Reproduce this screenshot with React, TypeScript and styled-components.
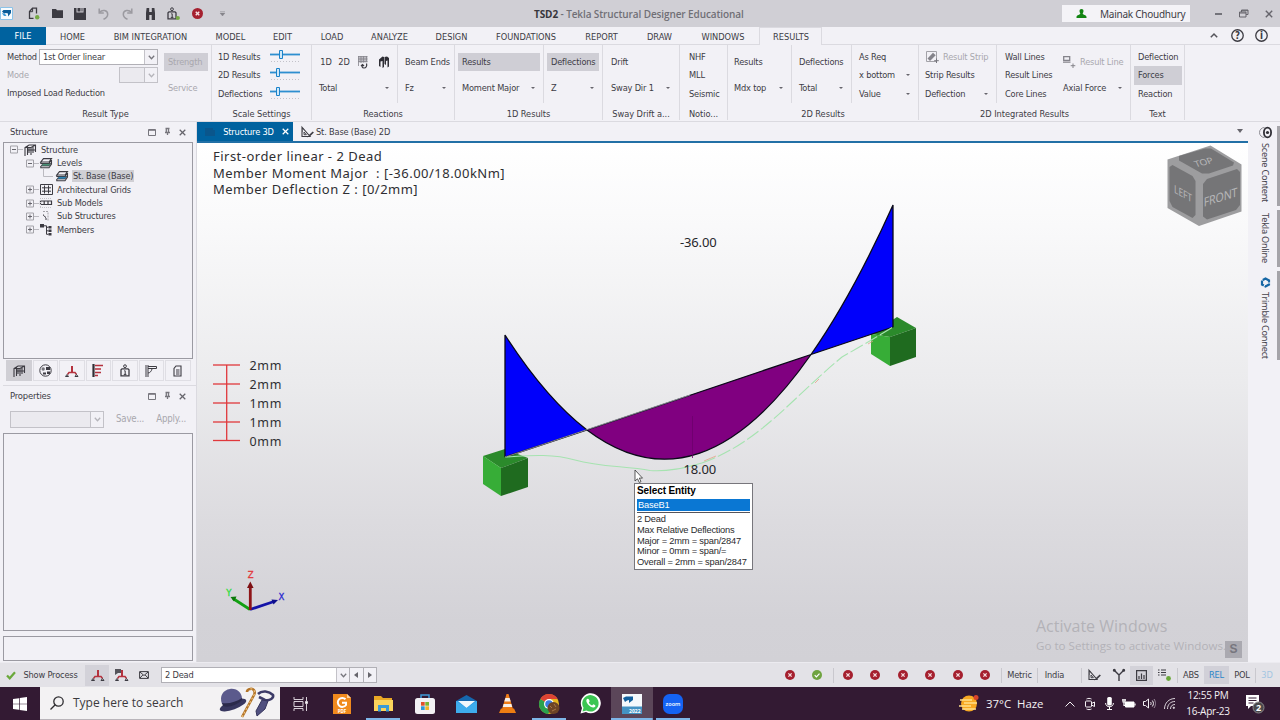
import React from "react";
import styled, {createGlobalStyle, css} from "styled-components";

const GlobalStyle = createGlobalStyle`
    * { box-sizing: border-box; }
    body {
        margin: 0;
        width: 1280px;
        height: 720px;
        overflow: hidden;
        background: #f2f1f6;
        font-family: "DejaVu Sans Condensed", "DejaVu Sans", sans-serif;
        font-stretch: condensed;
        font-size: 9.2px;
        line-height: 12px;
        letter-spacing: -0.18px;
        color: #3d3c45;
        white-space: nowrap;
    }
    svg { display: block; flex: none; overflow: visible; font-stretch: normal; }
`;

const colors = {
    chrome: '#d0cfd5',
    panel: '#f2f1f6',
    pressed: '#cfced5',
    line: '#dbdae0',
    accent: '#00629f',
    disabled: '#a9a8ae',
    icon: '#3c3b42',
};

const uiSans = css`
    font-family: "Open Sans", "Noto Sans", sans-serif;
    font-stretch: normal;
`;

const Window = styled.div`
    width: 1280px;
    height: 720px;
    display: flex;
    flex-direction: column;
`;

/* ---------- title bar ---------- */

const TitleBar = styled.header`
    height: 27px;
    display: flex;
    align-items: center;
    background: ${colors.chrome};
    flex: none;
`;
const Slot = styled.div<{$w: number, $on?: boolean, $h?: number}>`
    width: ${(p) => p.$w}px;
    height: ${(p) => p.$h ? `${p.$h}px` : 'auto'};
    display: flex;
    align-items: center;
    justify-content: center;
    flex: none;
    background: ${(p) => p.$on ? '#d3d2d9' : 'transparent'};
`;
const WindowTitle = styled.div`
    width: 822px;
    padding-left: 300px;
    ${uiSans}
    font-size: 10px;
    font-weight: 600;
    letter-spacing: -0.1px;
    color: #706f76;
    b { color: #37363c; font-weight: 700; }
`;
const UserBox = styled.div`
    width: 128px;
    height: 17px;
    padding-left: 14px;
    display: flex;
    align-items: center;
    gap: 13px;
    background: #f4f3f7;
    font-family: "Noto Sans", sans-serif;
    font-stretch: normal;
    font-size: 10px;
    letter-spacing: -0.25px;
`;
const Spacer = styled.div`
    flex: 1;
`;

/* ---------- ribbon ---------- */

const TabStrip = styled.nav`
    height: 18px;
    display: flex;
    flex: none;
    border-bottom: 1px solid ${colors.line};
    letter-spacing: 0;
`;
const FileTab = styled.div`
    width: 46px;
    height: 18px;
    line-height: 18px;
    text-align: center;
    color: #fff;
    background: ${colors.accent};
`;
const RibbonTab = styled.div<{$w: number, $active?: boolean}>`
    width: ${(p) => p.$w}px;
    height: 18px;
    padding-left: 1px;
    line-height: 19px;
    text-align: center;
    ${(p) => p.$active && css`
        background: ${colors.panel};
        border: 1px solid ${colors.line};
        border-bottom: 0;
        line-height: 18px;
    `}
`;
const RibbonBar = styled.section`
    height: 77px;
    display: flex;
    flex: none;
    border-bottom: 1px solid ${colors.line};
`;
const Group = styled.div<{$w: number}>`
    width: ${(p) => p.$w}px;
    height: 75px;
    display: flex;
    flex-direction: column;
    border-right: 1px solid ${colors.line};
`;
const GroupBody = styled.div`
    height: 59px;
    display: flex;
`;
const GroupTitle = styled.div`
    height: 16px;
    padding-top: 4px;
    text-align: center;
    letter-spacing: -0.05px;
`;
const Column = styled.div<{$w: number, $two?: boolean, $line?: boolean}>`
    width: ${(p) => p.$w}px;
    height: 58px;
    padding: ${(p) => p.$two ? '8px 3px 0' : '3px 3px 0'};
    display: flex;
    flex-direction: column;
    gap: ${(p) => p.$two ? 7 : 0}px;
    flex: none;
    border-right: ${(p) => p.$line ? `1px solid ${colors.line}` : '0'};
`;
const Command = styled.div<{$on?: boolean, $off?: boolean, $pad?: number}>`
    height: 18.4px;
    padding: 0 4px 0 ${(p) => p.$pad ?? 4}px;
    display: flex;
    align-items: center;
    gap: 4px;
    color: ${(p) => p.$off ? colors.disabled : 'inherit'};
    background: ${(p) => p.$on ? colors.pressed : 'transparent'};
`;
const Caret = styled.i`
    margin-left: auto;
    margin-right: 1px;
    border: 2px solid transparent;
    border-top-color: #66656c;
    border-bottom: 0;
`;
const FieldRow = styled.div<{$off?: boolean}>`
    height: 18px;
    padding-left: 4px;
    display: flex;
    align-items: center;
    justify-content: space-between;
    color: ${(p) => p.$off ? colors.disabled : 'inherit'};
`;
const Combo = styled.div<{$w: number, $h?: number, $off?: boolean}>`
    width: ${(p) => p.$w}px;
    height: ${(p) => p.$h ?? 16}px;
    padding-left: 3px;
    display: flex;
    align-items: center;
    justify-content: space-between;
    flex: none;
    border: 1px solid ${(p) => p.$off ? '#c3c2c8' : '#b1b0b6'};
    background: ${(p) => p.$off ? '#ebeaef' : '#fff'};
`;
const ComboButton = styled.span`
    width: 13px;
    height: 100%;
    display: flex;
    align-items: center;
    justify-content: center;
    border-left: 1px solid #c3c2c8;
    background: #f2f1f6;
`;
const StepButton = styled.div`
    width: 13.5px;
    height: 16px;
    display: flex;
    align-items: center;
    justify-content: center;
    flex: none;
    border: 1px solid #b1b0b6;
    border-left: 0;
    background: #f2f1f6;
`;
const SliderRow = styled.div`
    height: 18.3px;
    display: flex;
    align-items: center;
    padding-left: 3px;
    span { width: 52px; }
`;

/* ---------- work area ---------- */

const Main = styled.main`
    height: 540px;
    display: flex;
    flex: none;
`;
const Sidebar = styled.aside`
    width: 197px;
    display: flex;
    flex-direction: column;
    padding: 0 3px 1px 3px;
    border-right: 1px solid ${colors.line};
`;
const PanelHeader = styled.div`
    height: 20px;
    padding: 0 7px 0 7px;
    display: flex;
    align-items: center;
    flex: none;
    font-size: 9.4px;
`;
const PanelButtons = styled.div`
    margin-left: auto;
    display: flex;
    align-items: center;
    gap: 8px;
`;
const Frame = styled.div<{$h: number}>`
    height: ${(p) => p.$h}px;
    border: 1px solid #9b9aa2;
    flex: none;
`;
const TreeRow = styled.div<{$depth: number}>`
    height: 13.35px;
    padding-left: ${(p) => 6 + p.$depth * 16}px;
    display: flex;
    align-items: center;
    gap: 2px;
`;
const TreeLabel = styled.span<{$selected?: boolean}>`
    padding: 0 1px;
    margin-left: 2px;
    background: ${(p) => p.$selected ? '#d0cfd4' : 'transparent'};
`;
const PanelTabs = styled.div`
    height: 27px;
    padding: 1px 0 0 3px;
    display: flex;
    gap: 1px;
    border-bottom: 1px solid ${colors.line};
    margin-right: -3px;
    flex: none;
`;
const PanelTab = styled.div<{$on?: boolean}>`
    width: 25.5px;
    height: 21px;
    display: flex;
    align-items: center;
    justify-content: center;
    border: 1px solid ${(p) => p.$on ? '#d0cfd5' : '#dfdee4'};
    background: ${(p) => p.$on ? '#d0cfd5' : 'transparent'};
`;
const PropertyTools = styled.div`
    height: 27px;
    padding: 0 7px 1px 7px;
    display: flex;
    align-items: center;
    justify-content: space-between;
    font-size: 9.6px;
    color: ${colors.disabled};
    flex: none;
`;
const Workspace = styled.div`
    width: 1051px;
    display: flex;
    flex-direction: column;
`;
const DocTabs = styled.div`
    height: 21px;
    display: flex;
    align-items: flex-end;
    flex: none;
    border-bottom: 2px solid #2270a6;
`;
const DocTab = styled.div<{$w: number, $active?: boolean}>`
    width: ${(p) => p.$w}px;
    height: 19px;
    padding: 0 4px 0 8px;
    display: flex;
    align-items: center;
    justify-content: ${(p) => p.$active ? 'space-between' : 'flex-start'};
    gap: 2px;
    color: ${(p) => p.$active ? '#fff' : 'inherit'};
    background: ${(p) => p.$active ? colors.accent : 'transparent'};
`;
const DocMenu = styled.i`
    margin: 0 5px 8px auto;
    border: 3px solid transparent;
    border-top: 4px solid #66656c;
    border-bottom: 0;
`;
const Viewport = styled.div`
    position: relative;
    height: 519px;
    background: linear-gradient(#fff 0%, #f9f9fa 16%, #ebebed 46%, #dcdbdf 73%, #d3d2d7 92%, #d2d1d6 100%);
`;
const ResultHeading = styled.div`
    position: absolute;
    left: 16px;
    top: 5px;
    font-family: "Noto Sans", sans-serif;
    font-stretch: normal;
    font-size: 13px;
    line-height: 16.6px;
    letter-spacing: 0.48px;
    color: #2e2e32;
    white-space: pre;
`;
const EntityTip = styled.div`
    position: absolute;
    left: 437px;
    top: 340px;
    width: 119px;
    height: 87px;
    padding: 2px 1px 0;
    border: 1px solid #77767c;
    background: #fff;
    font-family: "Liberation Sans", Arial, sans-serif;
    font-size: 9.3px;
    line-height: 10.8px;
    letter-spacing: -0.2px;
    color: #2b2b2e;
    p { margin: 0 0 0 1px; }
`;
const TipTitle = styled.div`
    height: 13px;
    line-height: 10px;
    font-size: 10px;
    font-weight: bold;
    letter-spacing: -0.1px;
    color: #000;
    padding-left: 1px;
`;
const TipEntity = styled.div`
    height: 12px;
    margin: 0 1px 3px;
    padding-left: 1px;
    line-height: 12px;
    color: #fff;
    background: #0a77d3;
    box-shadow: 0 1px 0 #fff, 0 2px 0 #55545a;
`;
const Watermark = styled.div`
    position: absolute;
    left: 839px;
    top: 471px;
    ${uiSans}
    font-size: 11.6px;
    line-height: 16px;
    letter-spacing: 0;
    color: #b3b2b8;
    h2 {
        margin: 0;
        font-size: 16px;
        line-height: 24px;
        font-weight: 400;
    }
`;
const KeyHint = styled.div`
    position: absolute;
    right: 6px;
    bottom: 4px;
    width: 17px;
    height: 17px;
    font: bold 12px/17px "Liberation Sans", sans-serif;
    text-align: center;
    color: #77767e;
    background: #aaa9b0;
`;
const SideRail = styled.aside`
    width: 32px;
    padding: 4px 0 0 11px;
    display: flex;
    justify-content: space-between;
`;
const RailColumn = styled.div`
    display: flex;
    flex-direction: column;
    gap: 4px;
`;
const RailTab = styled.div<{$h: number}>`
    height: ${(p) => p.$h}px;
    display: flex;
    align-items: center;
    gap: 4px;
    writing-mode: vertical-rl;
    line-height: 13px;
    font-family: "Noto Sans", sans-serif;
    font-stretch: normal;
    font-size: 9.2px;
    letter-spacing: -0.25px;
    color: #45434c;
`;
const RailEdge = styled.i<{$h: number}>`
    width: 3px;
    height: ${(p) => p.$h}px;
    background: #a5a4a9;
`;

/* ---------- status bar and taskbar ---------- */

const StatusBar = styled.footer`
    height: 25px;
    display: flex;
    align-items: center;
    flex: none;
    background: #e3e2e7;
    border-top: 1px solid #ecebf0;
`;
const Divider = styled.i`
    width: 1px;
    height: 15px;
    background: #c9c8ce;
    flex: none;
`;
const Toggle = styled.div<{$w: number, $on?: boolean, $color?: string}>`
    width: ${(p) => p.$w}px;
    height: 18px;
    line-height: 18px;
    text-align: center;
    flex: none;
    color: ${(p) => p.$color ?? 'inherit'};
    background: ${(p) => p.$on ? '#d1d0d8' : 'transparent'};
`;
const Taskbar = styled.div`
    height: 33px;
    display: flex;
    align-items: center;
    flex: none;
    background: #331a33;
    color: #f4f1f4;
    ${uiSans}
    letter-spacing: 0;
`;
const SearchBox = styled.div`
    width: 240px;
    height: 33px;
    padding: 0 5px 0 10px;
    display: flex;
    align-items: center;
    background: #f3f2f3;
    border-bottom: 1px solid #b9b5ba;
    font-size: 12px;
    color: #3b3a3d;
    flex: none;
    span { margin: 0 auto 0 9px; }
`;
const TaskButton = styled.div<{$running?: boolean, $active?: boolean}>`
    width: 41.4px;
    height: 33px;
    display: flex;
    align-items: center;
    justify-content: center;
    flex: none;
    background: ${(p) => p.$active ? '#5b4659' : 'transparent'};
    ${(p) => p.$running && css`
        background-image: linear-gradient(#7eb6e8, #7eb6e8);
        background-size: ${p.$active ? '100%' : '34px'} 2px;
        background-position: bottom;
        background-repeat: no-repeat;
    `}
`;
const Weather = styled.div`
    width: 101px;
    display: flex;
    align-items: center;
    gap: 7px;
    font-size: 11.4px;
    white-space: pre;
    flex: none;
`;
const Clock = styled.div`
    width: 58px;
    text-align: center;
    font-size: 10px;
    line-height: 15.4px;
    letter-spacing: -0.25px;
    flex: none;
`;

/* ---------- icons ---------- */

const Chevron = ({color = '#77767d'}: {color?: string}) => (
    <svg width="7" height="5" viewBox="0 0 7 5"><path d="M.8.8 3.5 3.8 6.2.8" fill="none" stroke={color} strokeWidth="1.3" /></svg>
);

const Close = ({size = 7, color = '#66656c'}: {size?: number, color?: string}) => (
    <svg width={size} height={size} viewBox="0 0 8 8"><path d="M.8.8l6.4 6.4M7.2.8.8 7.2" stroke={color} strokeWidth="1.4" /></svg>
);

const ErrorDot = ({size = 10}: {size?: number}) => (
    <svg width={size} height={size} viewBox="0 0 10 10">
        <circle cx="5" cy="5" r="5" fill="#a5202f" />
        <path d="M3.4 3.4l3.2 3.2M6.6 3.4 3.4 6.6" stroke="#f6dfe2" strokeWidth="1.3" />
    </svg>
);

const OkDot = () => (
    <svg width="10" height="10" viewBox="0 0 10 10">
        <circle cx="5" cy="5" r="5" fill="#6fa340" />
        <path d="M2.7 5.2 4.4 6.9 7.5 3.6" fill="none" stroke="#fff" strokeWidth="1.2" />
    </svg>
);

const AppIcon = () => (
    <svg width="13" height="13" viewBox="0 0 13 13">
        <path d="M.5.5h12v12H.5z" fill="#f7fbfe" stroke="#8cc3e8" />
        <path d="M2 4.5 3.5 3H11v3L8 9.5V6.5L6 6 4 6.500z" fill="#0b5c99" />
        <path d="M1.8 6 5 6.8 6.500 9 4 9z" fill="#3f9ad6" />
    </svg>
);

const NewFile = () => (
    <svg width="12" height="13" viewBox="0 0 12 13">
        <path d="M5.5 11.300H1.500V4.500L4.500 1.200H8.500V6.500" fill="none" stroke={colors.icon} strokeWidth="1.3" />
        <path d="M4.600 1.500V4.700H1.500" fill="none" stroke={colors.icon} />
        <circle cx="9.200" cy="10.300" r="2.200" fill="#76aa45" />
    </svg>
);

const Folder = () => (
    <svg width="11" height="9" viewBox="0 0 11 9"><path d="M0 0h4l1 1.3h6V9H0z" fill={colors.icon} /></svg>
);

const Save = () => (
    <svg width="12" height="12" viewBox="0 0 12 12">
        <path d="M0 0h2.5v4.5h7V0H12v12H0z" fill={colors.icon} />
        <path d="M3.5 0h3v3.5h-3zM7.5 0h1v3.5h-1z" fill={colors.icon} />
    </svg>
);

const Undo = ({flip}: {flip?: boolean}) => (
    <svg width="11" height="12" viewBox="0 0 11 12">
        <g transform={flip ? 'translate(11 0) scale(-1 1)' : undefined} fill="none" stroke="#9b9aa0" strokeWidth="1.5">
            <path d="M1.500 4.500C4 1.300 9.700 1.800 9.700 6.300 9.700 9 7.800 10.400 5.500 11.300" />
            <path d="M1.200.5v4.600h4.600" />
        </g>
    </svg>
);

const Binoculars = () => (
    <svg width="9" height="12" viewBox="0 0 9 12"><path d="M.6 0h2.600v4h2.600V0h2.600L9 5v7H5.700V7H3.300v5H0V5z" fill={colors.icon} /></svg>
);

const Weight = ({dot}: {dot?: boolean}) => (
    <svg width={dot ? 13 : 10} height="13" viewBox={dot ? '0 0 13 13' : '0 0 10 13'}>
        <circle cx="5" cy="2.200" r="1.400" fill="none" stroke={colors.icon} />
        <path d="M2 4.800h6l1 1v6H1v-6z" fill="none" stroke={colors.icon} strokeWidth="1.300" />
        <path d="M4.200 6.800h1v3.700M3.800 10.400h2.600" fill="none" stroke={colors.icon} />
        {dot && <circle cx="10.800" cy="11" r="2.100" fill="#76aa45" />}
    </svg>
);

const User = () => (
    <svg width="11" height="10" viewBox="0 0 11 10"><path d="M5.500 0c1.400 0 2 .9 2 2 0 1.300-.6 1.800-.8 2.600 0 1.500 3.800 1.200 3.800 3.400V9H.5V8c0-2.200 3.800-1.900 3.800-3.400-.2-.8-.8-1.300-.8-2.600 0-1.100.6-2 2-2z" fill="#138513" /></svg>
);

const Restore = () => (
    <svg width="10" height="9" viewBox="0 0 10 9" fill="none" stroke="#66656c">
        <path d="M.5 3H7v5H.5zM.5 4H7M2.500 3V1H9v4.500H7M2.500 1.700H9" />
    </svg>
);

const Roundel = ({label}: {label: string}) => (
    <svg width="13" height="13" viewBox="0 0 12 12">
        <circle cx="6" cy="6" r="5.300" fill="none" stroke="#3c3b42" strokeWidth="1.200" />
        <text x="6" y="9.200" fontSize="9" fontWeight="bold" textAnchor="middle" fill="#3c3b42" letterSpacing="0">{label}</text>
    </svg>
);

const Slider = ({at}: {at: number}) => (
    <svg width="30" height="14" viewBox="0 0 30 14">
        <path d="M0 4.500h30" stroke="#2e8fd0" strokeWidth="1.800" />
        <path d={`M${at - 1.5} .5h3v8h-3z`} fill="#cfe8f8" stroke="#1c83ca" />
        <path d="M1 11.500h28" stroke="#c3c2c9" strokeDasharray="1 2" />
    </svg>
);

const WallLoad = () => (
    <svg width="10" height="13" viewBox="0 0 10 13">
        <path d="M.5.500h9v6h-9z" fill="#bdbcc2" />
        <path d="M.5 0v10M3 0v7M5.500 0v6.500M8.500 0v5.500M0 .5h9.500M0 3h9.500M0 5.500h9.500" stroke="#85848b" strokeWidth=".8" />
        <path d="M8.500 7.500c.8 2.500-.5 4.500-2.500 4.500S3.800 10.500 4.500 9M3 10l1.500-1.500L6 10" fill="none" stroke={colors.icon} strokeWidth="1.200" />
    </svg>
);

const WallBars = () => (
    <svg width="10" height="12" viewBox="0 0 10 12">
        <path d="M0 3.500 3.500.5 5 1v10l-1.500 1V5L1.500 5.500V11L0 10z" fill="#2f2e35" />
        <path d="M5.500 1 8 .5l2 1.500v8.500L8.500 11.500V4.500L7 5v4L5.500 8z" fill="#2f2e35" />
    </svg>
);

const StripIcon = () => (
    <svg width="13" height="12" viewBox="0 0 13 12">
        <path d="M.5.5h10v10H.5z" fill="none" stroke="#a3a2a8" />
        <path d="M1.500 7.500 7 1.800l2.700 2.400L4 10z" fill="#85848b" />
        <path d="M10.500 7.500v4.500M8.200 9.700h4.600" stroke="#77767d" />
    </svg>
);

const LineIcon = () => (
    <svg width="13" height="12" viewBox="0 0 13 12">
        <path d="M.7.700h6v3.600h-6zM0 6.200h7.500" fill="none" stroke="#85848b" strokeWidth="1.300" />
        <path d="M10 7.500V12M7.700 9.700h4.600" stroke="#85848b" />
    </svg>
);

// drawing board with a set square, shared by the plan tab and the status bar
const DraftIcon = () => (
    <svg width="13" height="12" viewBox="0 0 13 12" fill="none" stroke={colors.icon}>
        <path d="M1 1.200v9.300h8z" strokeWidth="1.100" />
        <path d="M3 6v2.700h2.400zM1 3h1.500M1 5h1" strokeWidth=".9" />
        <path d="M12.300 6 8.500 9.700" strokeWidth="1.700" />
        <path d="M8.500 9.700 6.800 11" />
    </svg>
);

const FrameIcon = () => (
    <svg width="12" height="12" viewBox="0 0 12 12" fill="none" stroke={colors.icon} strokeWidth="1.100">
        <path d="M1 12V3.500L5 1h6.500v7M1 3.500h6V11M3.500 11V2M7 3.500 11.500 1M4 6h7M5 4v5M9 2v7" />
    </svg>
);

const LevelIcon = ({base}: {base?: boolean}) => (
    <svg width="12" height="11" viewBox="0 0 12 11">
        <path d="M3.500.6h8L9 4H.8zM.8 4v1.500H9l2.500-3.500M.8 8v1.800H9L11.500 6V2" fill="none" stroke={colors.icon} strokeWidth="1.100" />
        <path d="M1 8 3 5.500h8L9 8z" fill={base ? '#2a83b5' : '#499075'} stroke={colors.icon} strokeWidth=".7" />
    </svg>
);

const GridIcon = () => (
    <svg width="13" height="11" viewBox="0 0 13 11" fill="none" stroke={colors.icon}>
        <path d="M.5.5h12v10H.5zM4.500 1.500v8M8.500 1.500v8M2 3.800h9M2 7.200h9" />
    </svg>
);

const SubModelIcon = () => (
    <svg width="12" height="10" viewBox="0 0 12 10" fill="none">
        <path d="M.5 3h11v3.500H.5zM4.200 3v3.500M8 3v3.500" stroke={colors.icon} strokeWidth="1.200" />
        <path d="M0 .5h11M0 9.500h11M.5 0v10" stroke="#c3c2c8" strokeDasharray="1 1" />
    </svg>
);

const SubStructureIcon = () => (
    <svg width="12" height="10" viewBox="0 0 12 10" fill="none" stroke="#a3a2a8">
        <path d="M3 .5h5v9M3 3l3 3M6 9V6" strokeDasharray="2 1" />
        <path d="M3 4 6 7v2" stroke="#66656c" />
    </svg>
);

const MembersIcon = () => (
    <svg width="12" height="12" viewBox="0 0 12 12">
        <path d="M0 0h4v3.500H0zM8.500 2h3v2.500h-3zM8.500 5.500h3V8h-3zM8.500 9h3v2.500h-3z" fill={colors.icon} />
        <path d="M4 1.800h2.500v8.500h2M6.500 3.300h2M6.500 6.800h2" fill="none" stroke={colors.icon} />
    </svg>
);

const Expander = ({open}: {open?: boolean}) => (
    <svg width="12" height="9" viewBox="0 0 12 9" fill="none">
        <path d="M.5 1h7v7h-7z" stroke="#a3a2a8" />
        <path d={open ? 'M2 4.5h4' : 'M2 4.5h4M4 2.5v4'} stroke="#66656c" />
        <path d="M8 4.500h5" stroke="#bbbac0" />
    </svg>
);

const Elbow = () => (
    <svg width="10" height="14" viewBox="0 0 10 14"><path d="M.5 0v7.500H10" fill="none" stroke="#bbbac0" /></svg>
);

const SphereIcon = () => (
    <svg width="13" height="13" viewBox="0 0 13 13">
        <circle cx="6.500" cy="6.500" r="5.700" fill="none" stroke={colors.icon} />
        <circle cx="4.200" cy="5" r="1.700" fill="#77767d" />
        <path d="M7 3h4v3H7zM4 8.500h3v2H4zM8 7.500h3V10H8z" fill={colors.icon} />
    </svg>
);

const ReactionIcon = ({flag}: {flag?: boolean}) => (
    <svg width="13" height="12" viewBox="0 0 13 12" fill="none">
        {flag && <path d="M0 0h6v4H3L0 6z" fill="#55545b" />}
        <path d="M7 1v6" stroke="#b5323e" strokeWidth="2" />
        <path d="M2.500 9.500 4 7.500h6l1.500 2" stroke="#b5323e" strokeWidth="1.500" />
        <path d="M.5 11.500 2 9.500l1.500 2zM10 11.500l1.500-2 1.500 2z" stroke={colors.icon} />
    </svg>
);

const LoadListIcon = () => (
    <svg width="12" height="13" viewBox="0 0 12 13">
        <path d="M1.500 0v13" stroke="#2f2e35" strokeWidth="2.200" />
        <path d="M3 1.500h8M3 5h6M3 8.500h6M3 11.500h3" stroke="#b5323e" strokeWidth="1.300" />
    </svg>
);

const BracketIcon = () => (
    <svg width="12" height="12" viewBox="0 0 12 12" fill="none" stroke={colors.icon}>
        <path d="M1 0v12M3 0v12M3 1.500h8.500v2H3M3 8c2 0 3.500-2 4-4" />
    </svg>
);

const ReportIcon = () => (
    <svg width="9" height="12" viewBox="0 0 9 12" fill="none" stroke={colors.icon}>
        <path d="M3 1h5v10H1V3.500zM3 5h3.500M3 7h3.500M3 9h3.500" strokeWidth="1.100" />
    </svg>
);

const PanelIcons = () => (
    <PanelButtons>
        <svg width="8" height="7" viewBox="0 0 8 7"><path d="M.5.5h7v6h-7zM.5 1.300h7" fill="none" stroke="#77767d" /></svg>
        <svg width="7" height="8" viewBox="0 0 7 8"><path d="M1.500.5h4M2.300 0v4.500M4.500 0v4.500M1 4.500h5M3.500 4.500V7" fill="none" stroke="#77767d" strokeWidth="1.300" /></svg>
        <Close />
    </PanelButtons>
);

/* ---------- ribbon contents ---------- */

const ribbonTabs: [string, number][] = [
    ['HOME', 52], ['BIM INTEGRATION', 104], ['MODEL', 56], ['EDIT', 48], ['LOAD', 51],
    ['ANALYZE', 64], ['DESIGN', 60], ['FOUNDATIONS', 89], ['REPORT', 62], ['DRAW', 54],
    ['WINDOWS', 73], ['RESULTS', 63],
];

const Drop = ({children, pad}: {children: React.ReactNode, pad?: number}) => (
    <Command $pad={pad}>{children}<Caret /></Command>
);

const Ribbon = () => (
    <RibbonBar>
        <Group $w={212}>
            <GroupBody>
                <Column $w={161}>
                    <FieldRow>
                        Method
                        <Combo $w={119}>1st Order linear<ComboButton><Chevron /></ComboButton></Combo>
                    </FieldRow>
                    <FieldRow $off>
                        Mode
                        <Combo $w={39} $off><i /><ComboButton><Chevron color="#b5b4ba" /></ComboButton></Combo>
                    </FieldRow>
                    <FieldRow>Imposed Load Reduction</FieldRow>
                </Column>
                <Column $w={50} $two>
                    <Command $on $off>Strength</Command>
                    <Command $off>Service</Command>
                </Column>
            </GroupBody>
            <GroupTitle>Result Type</GroupTitle>
        </Group>
        <Group $w={100}>
            <GroupBody>
                <Column $w={99}>
                    <SliderRow><span>1D Results</span><Slider at={11} /></SliderRow>
                    <SliderRow><span>2D Results</span><Slider at={8} /></SliderRow>
                    <SliderRow><span>Deflections</span><Slider at={8} /></SliderRow>
                </Column>
            </GroupBody>
            <GroupTitle>Scale Settings</GroupTitle>
        </Group>
        <Group $w={143}>
            <GroupBody>
                <Column $w={86} $two $line>
                    <Command><Slot $w={14}>1D</Slot><Slot $w={14}>2D</Slot><Slot $w={16}><WallLoad /></Slot><Slot $w={17}><WallBars /></Slot></Command>
                    <Drop>Total</Drop>
                </Column>
                <Column $w={56} $two>
                    <Command>Beam Ends</Command>
                    <Drop>Fz</Drop>
                </Column>
            </GroupBody>
            <GroupTitle>Reactions</GroupTitle>
        </Group>
        <Group $w={148}>
            <GroupBody>
                <Column $w={89} $two $line>
                    <Command $on>Results</Command>
                    <Drop>Moment Major</Drop>
                </Column>
                <Column $w={58} $two>
                    <Command $on>Deflections</Command>
                    <Drop>Z</Drop>
                </Column>
            </GroupBody>
            <GroupTitle>1D Results</GroupTitle>
        </Group>
        <Group $w={77}>
            <GroupBody>
                <Column $w={75} $two>
                    <Command $pad={5}>Drift</Command>
                    <Drop pad={5}>Sway Dir 1</Drop>
                </Column>
            </GroupBody>
            <GroupTitle>Sway Drift a...</GroupTitle>
        </Group>
        <Group $w={48}>
            <GroupBody>
                <Column $w={47}>
                    <Command $pad={6}>NHF</Command>
                    <Command $pad={6}>MLL</Command>
                    <Command $pad={6}>Seismic</Command>
                </Column>
            </GroupBody>
            <GroupTitle>Notio...</GroupTitle>
        </Group>
        <Group $w={191}>
            <GroupBody>
                <Column $w={64} $two $line>
                    <Command $pad={3}>Results</Command>
                    <Drop pad={3}>Mdx top</Drop>
                </Column>
                <Column $w={60} $two $line>
                    <Command>Deflections</Command>
                    <Drop>Total</Drop>
                </Column>
                <Column $w={66}>
                    <Command>As Req</Command>
                    <Drop>x bottom</Drop>
                    <Drop>Value</Drop>
                </Column>
            </GroupBody>
            <GroupTitle>2D Results</GroupTitle>
        </Group>
        <Group $w={212}>
            <GroupBody>
                <Column $w={78} $line>
                    <Command $off><StripIcon />Result Strip</Command>
                    <Command $pad={3}>Strip Results</Command>
                    <Drop pad={3}>Deflection</Drop>
                </Column>
                <Column $w={60}>
                    <Command $pad={5}>Wall Lines</Command>
                    <Command $pad={5}>Result Lines</Command>
                    <Command $pad={5}>Core Lines</Command>
                </Column>
                <Column $w={73} $two>
                    <Command $off $pad={3}><LineIcon />Result Line</Command>
                    <Drop pad={3}>Axial Force</Drop>
                </Column>
            </GroupBody>
            <GroupTitle>2D Integrated Results</GroupTitle>
        </Group>
        <Group $w={54}>
            <GroupBody>
                <Column $w={54}>
                    <Command>Deflection</Command>
                    <Command $on>Forces</Command>
                    <Command>Reaction</Command>
                </Column>
            </GroupBody>
            <GroupTitle>Text</GroupTitle>
        </Group>
    </RibbonBar>
);

/* ---------- side panels ---------- */

interface TreeItem {
    label: string,
    depth: number,
    icon: React.ReactNode,
    open?: boolean,
    leaf?: boolean,
}

const treeItems: TreeItem[] = [
    {label: 'Structure', depth: 0, icon: <FrameIcon />, open: true},
    {label: 'Levels', depth: 1, icon: <LevelIcon />, open: true},
    {label: 'St. Base (Base)', depth: 2, icon: <LevelIcon base />, leaf: true},
    {label: 'Architectural Grids', depth: 1, icon: <GridIcon />},
    {label: 'Sub Models', depth: 1, icon: <SubModelIcon />},
    {label: 'Sub Structures', depth: 1, icon: <SubStructureIcon />},
    {label: 'Members', depth: 1, icon: <MembersIcon />},
];

const LeftPanels = () => (
    <Sidebar>
        <PanelHeader>Structure<PanelIcons /></PanelHeader>
        <Frame $h={217}>
            {treeItems.map((item) => (
                <TreeRow key={item.label} $depth={item.depth}>
                    <Slot $w={12}>{item.leaf ? <Elbow /> : <Expander open={item.open} />}</Slot>
                    <Slot $w={12}>{item.icon}</Slot>
                    <TreeLabel $selected={item.leaf}>{item.label}</TreeLabel>
                </TreeRow>
            ))}
        </Frame>
        <PanelTabs>
            <PanelTab $on><FrameIcon /></PanelTab>
            <PanelTab><SphereIcon /></PanelTab>
            <PanelTab><ReactionIcon /></PanelTab>
            <PanelTab><LoadListIcon /></PanelTab>
            <PanelTab><Weight /></PanelTab>
            <PanelTab><BracketIcon /></PanelTab>
            <PanelTab><ReportIcon /></PanelTab>
        </PanelTabs>
        <PanelHeader>Properties<PanelIcons /></PanelHeader>
        <PropertyTools>
            <Combo $w={94} $h={17} $off><i /><ComboButton><Chevron color="#b5b4ba" /></ComboButton></Combo>
            <span>Save...</span>
            <span>Apply...</span>
        </PropertyTools>
        <Frame $h={198} />
        <Spacer />
        <Frame $h={25} />
    </Sidebar>
);

/* ---------- model view ---------- */

const scaleMarks: [number, string][] = [[365, '2mm'], [384, '2mm'], [403, '1mm'], [422, '1mm'], [440.5, '0mm']];

const Scene = () => (
    <svg width="1051" height="519" viewBox="197 143 1051 519" fontFamily="Noto Sans, sans-serif">
        {/* supports */}
        <path d="M483 456 505 449l23 9-27 10z" fill="#2b8a2b" />
        <path d="M483 456l18 12v28l-18-12z" fill="#37ad37" />
        <path d="M501 468l27-10v29l-27 9z" fill="#1f6b1f" />
        <path d="M871 334l26-17 19 11-26 9z" fill="#2b8a2b" />
        <path d="M871 334l19 3v29l-19-12z" fill="#37ad37" />
        <path d="M890 337l26-9v29l-26 9z" fill="#1f6b1f" />
        {/* moment diagram: parabola over the member from (505,457) to (893,327) */}
        <g stroke="#0a0a18" strokeWidth="1.300" strokeLinejoin="bevel">
            <path d="M505 457V335Q546 398.600 587 430Z" fill="#0000fb" />
            <path d="M587 430Q699 514.500 811 354.500Z" fill="#800080" />
            <path d="M811 354.500Q852 296.100 893 205V327Z" fill="#0000fb" />
        </g>
        <path d="M507 456.500 690 395" stroke="#8f8e98" strokeWidth=".9" />
        <path d="M692.500 416v42" stroke="#6c006c" strokeWidth=".8" />
        {/* deflected shape */}
        <path d="M505 457C525 456 550 453 575 460S625 466 650 470.500C672 472 690 466 702 463" fill="none" stroke="#a6e3b0" strokeWidth="1.100" />
        <path d="M702 463C760 442 790 400 842 357Q865 344 893 327" fill="none" stroke="#a6e3b0" strokeWidth="1.100" strokeDasharray="14 3" />
        <path d="M704 461l12-5M868 344l5-3M815 383l4-4" stroke="#e6a187" strokeWidth=".8" />
        <g fontSize="13" fill="#26262a" letterSpacing="-.15">
            <text x="680" y="247">-36.00</text>
            <text x="683.500" y="474">18.00</text>
        </g>
        {/* deflection scale */}
        <path d="M226.700 365v75.500" stroke="#e0383c" strokeWidth="1.300" />
        {scaleMarks.map(([y, label]) => (
            <g key={y}>
                <path d={`M213 ${y}h27`} stroke="#e0383c" strokeWidth="1.300" />
                <text x="249.500" y={y + 5} fontSize="12.500" letterSpacing=".7" fill="#2e2e32">{label}</text>
            </g>
        ))}
        {/* axis triad */}
        <g strokeWidth="2.800">
            <path d="M250 609.500l-17-11" stroke="#12a012" />
            <path d="M250 609.500l24-8" stroke="#1414a8" />
            <path d="M250.300 610v-25" stroke="#8e1418" />
        </g>
        <path d="M247 588l3.300-6.500 3.300 6.500z" fill="#7d1014" />
        <path d="M230.500 597l6-.5-2.500 5z" fill="#0a780a" />
        <path d="M278 600l-6.500-.5 2 5z" fill="#0e0e8c" />
        <g fontSize="9.500" textAnchor="middle" fontFamily="DejaVu Sans Condensed, sans-serif" strokeWidth=".3">
            <text x="250.500" y="577.500" fill="#e23a3c" stroke="#e23a3c">Z</text>
            <text x="228.700" y="595.500" fill="#2fdc3c" stroke="#2fdc3c">Y</text>
            <text x="281.300" y="600" fill="#2a2ad0" stroke="#2a2ad0">X</text>
        </g>
        {/* orientation cube */}
        <path d="M1210.500 145.500 1241.500 164.500V211.500L1199 226 1167.500 208V159.500z" fill="#9d9d9f" />
        <path d="M1179 156l26-7.500h6l23 14-1 3-24 8h-7l-23-13z" fill="#757577" />
        <path d="M1169.500 167l3-2 20 11 3 5v34l-3 3-20-11-3-6z" fill="#757577" />
        <path d="M1203 184l4-5 30-10 3 3v33l-4 5-29 9.500-4-3z" fill="#757577" />
        <g fill="#b5b5b7" fontSize="13" textAnchor="middle">
            <text transform="matrix(.74 -.18 .3 .62 1205 165)">TOP</text>
            <text transform="matrix(.66 .36 0 .85 1183 197.500)">LEFT</text>
            <text transform="matrix(.82 -.25 0 .95 1220.500 201.500)">FRONT</text>
        </g>
        {/* mouse pointer */}
        <path d="M635 470v11l2.500-2.200 1.800 3.700 1.700-.9-1.700-3.500h3.200z" fill="#fff" stroke="#333" strokeWidth=".8" />
    </svg>
);

const ModelView = () => (
    <Workspace>
        <DocTabs>
            <DocTab $w={96} $active>
                <svg width="10" height="8" viewBox="0 0 10 8"><path d="M0 0h8v2h2v6H0z" fill="#0a568c" /></svg>
                Structure 3D
                <Close color="#fff" />
            </DocTab>
            <DocTab $w={110}><DraftIcon />St. Base (Base) 2D</DocTab>
            <DocMenu />
        </DocTabs>
        <Viewport>
            <Scene />
            <ResultHeading>{'First-order linear - 2 Dead\nMember Moment Major  : [-36.00/18.00kNm]\nMember Deflection Z : [0/2mm]'}</ResultHeading>
            <EntityTip>
                <TipTitle>Select Entity</TipTitle>
                <TipEntity>BaseB1</TipEntity>
                <p>2 Dead</p>
                <p>Max Relative Deflections</p>
                <p>Major = 2mm = span/2847</p>
                <p>Minor = 0mm = span/=</p>
                <p>Overall = 2mm = span/2847</p>
            </EntityTip>
            <Watermark>
                <h2>Activate Windows</h2>
                Go to Settings to activate Windows.
            </Watermark>
            <KeyHint>S</KeyHint>
        </Viewport>
    </Workspace>
);

const RightRail = () => (
    <SideRail>
        <RailColumn>
            <RailTab $h={83}>
                <svg width="12" height="13" viewBox="0 0 12 13">
                    <path d="M4.500 1.500a5 5 0 0 0 0 10" fill="none" stroke="#8d8c93" />
                    <ellipse cx="7.500" cy="6.500" rx="3.600" ry="4.800" fill="#f2f1f6" stroke="#2f2e35" strokeWidth="1.800" />
                    <circle cx="7.500" cy="6.500" r="1.600" fill="#2f2e35" />
                </svg>
                Scene Content
            </RailTab>
            <RailTab $h={60}>Tekla Online</RailTab>
            <RailTab $h={84}>
                <svg width="11" height="11" viewBox="0 0 11 11">
                    <path d="M5.500 1.500 9 3.500v4l-3.500 2L2 7.500v-4z" fill="none" stroke="#1767a5" strokeWidth="2.200" strokeDasharray="6 1" />
                </svg>
                Trimble Connect
            </RailTab>
        </RailColumn>
        <RailColumn>
            <RailEdge $h={80} />
            <RailEdge $h={57} />
            <RailEdge $h={89} />
        </RailColumn>
    </SideRail>
);

/* ---------- bottom bars ---------- */

const Status = () => (
    <StatusBar>
        <Slot $w={22}><svg width="10" height="9" viewBox="0 0 10 9"><path d="M1 4.500 3.700 7.300 9 1.200" fill="none" stroke="#6aa83a" strokeWidth="2.200" /></svg></Slot>
        <Slot $w={57}>Show Process</Slot>
        <Slot $w={6} />
        <Slot $w={24} $h={21} $on><ReactionIcon /></Slot>
        <Slot $w={24}><ReactionIcon flag /></Slot>
        <Slot $w={22}>
            <svg width="10" height="8" viewBox="0 0 10 8" fill="none" stroke={colors.icon}><path d="M.6.6h8.800v6.800H.6zM1 1l4 3.500L9 1M1 7l2.800-3M9 7 6.200 4" /></svg>
        </Slot>
        <Slot $w={6} />
        <Combo $w={189}>2 Dead<ComboButton><Chevron /></ComboButton></Combo>
        <StepButton><svg width="4" height="6" viewBox="0 0 4 6"><path d="M4 0v6L0 3z" fill="#66656c" /></svg></StepButton>
        <StepButton><svg width="4" height="6" viewBox="0 0 4 6"><path d="M0 0v6l4-3z" fill="#66656c" /></svg></StepButton>
        <Spacer />
        <Slot $w={27}><ErrorDot /></Slot>
        <Slot $w={28}><OkDot /></Slot>
        <Slot $w={2} />
        <Divider />
        {[0, 1, 2, 3, 4, 5].map((n) => <Slot key={n} $w={27.5}><ErrorDot /></Slot>)}
        <Slot $w={2} />
        <Divider />
        <Toggle $w={35}>Metric</Toggle>
        <Divider />
        <Toggle $w={33}>India</Toggle>
        <Slot $w={10} />
        <Divider />
        <Slot $w={25}><DraftIcon /></Slot>
        <Slot $w={23}>
            <svg width="12" height="12" viewBox="0 0 12 12" stroke={colors.icon} strokeWidth="1.400"><path d="M1 1l5 5 5-5M6 6v6" fill="none" /><circle cx="1.300" cy="1.300" r=".8" /><circle cx="10.700" cy="1.300" r=".8" /></svg>
        </Slot>
        <Slot $w={23} $h={19} $on>
            <svg width="11" height="11" viewBox="0 0 11 11" fill="none" stroke={colors.icon} strokeWidth="1.200"><path d="M.6.6h9.800v9.800H.6zM3 9V6M5.500 9V3.500M8 9V5" /></svg>
        </Slot>
        <Slot $w={23}>
            <svg width="13" height="12" viewBox="0 0 13 12"><path d="M0 1h1.500M3 1h5M0 3.500h1.500M3 3.500h5M0 6h1.500M3 6h5" stroke={colors.icon} strokeWidth="1.200" /><circle cx="10.500" cy="9.500" r="2.400" fill="#6aa83a" /></svg>
        </Slot>
        <Slot $w={1} />
        <Divider />
        <Toggle $w={26}>ABS</Toggle>
        <Toggle $w={25} $on $color="#2b86c9">REL</Toggle>
        <Toggle $w={26}>POL</Toggle>
        <Divider />
        <Toggle $w={22} $color="#a4c6e2">3D</Toggle>
        <Slot $w={2} />
    </StatusBar>
);

const SearchArt = () => (
    <svg width="56" height="30" viewBox="0 0 56 30">
        <ellipse cx="14" cy="17" rx="14" ry="4.500" transform="rotate(-20 14 17)" fill="#38375f" />
        <path d="M3 16C0 8 4 2 11 1s12 4 12 10c-6 5-14 7-20 5z" fill="#5b5a8c" />
        <path d="M3 15c7 1 14-1 20-5v2c-5 5-13 8-19 6z" fill="#2b2a4b" />
        <path d="M23 29 35 7c2-4-1-7-4-6-2 0-3 2-3 3" fill="none" stroke="#b37428" strokeWidth="2.600" />
        <path d="M23 29 35 7c2-4-1-7-4-6" fill="none" stroke="#ecc27c" strokeWidth="1.200" strokeDasharray="2 2" />
        <path d="M39 6c4-4 11-3 15 1 1 3-3 6-8 5l-6-3" fill="none" stroke="#3d3c68" strokeWidth="2.600" />
        <path d="M43 12l6 1-3 8-8 7-1-5z" fill="#50507f" stroke="#36355c" />
    </svg>
);

const TaskApps = () => (
    <>
        <TaskButton>
            <svg width="16" height="14" viewBox="0 0 16 14" fill="none" stroke="#d9d0d9"><path d="M1 0v2.500h9V0M1 14v-2.500h9V14M1 4.500h9v5H1zM13.500 0v14" /><path d="M12.500 4.500h2v2h-2z" fill="#fff" /></svg>
        </TaskButton>
        <TaskButton>
            <svg width="20" height="20" viewBox="0 0 20 20"><path d="M1 0h14l4 4v16H1z" fill="#f08a1d" /><path d="M15 0l4 4h-4z" fill="#ffd39b" /><path d="M13.500 5.200A4.500 4.500 0 1 0 14 11V8.800h-4" fill="none" stroke="#fff" strokeWidth="2" /><text x="10" y="18.800" fontSize="4.500" fontWeight="bold" fill="#fff" textAnchor="middle">PDF</text></svg>
        </TaskButton>
        <TaskButton $running>
            <svg width="19" height="16" viewBox="0 0 19 16"><path d="M0 0h7l2 2h9v4H0z" fill="#e9a825" /><path d="M0 4h19v11H0z" fill="#fbd45c" /><path d="M4 15.500V9h11v6.500h-3V12H7v3.500z" fill="#3b9bd6" /></svg>
        </TaskButton>
        <TaskButton>
            <svg width="20" height="20" viewBox="0 0 20 20"><path d="M6 5V1h8v4" fill="none" stroke="#3f9bd8" strokeWidth="1.500" /><rect y="4" width="20" height="16" rx="2.500" fill="#f2f1f4" /><path d="M6 8h3.700v3.700H6z" fill="#e2502b" /><path d="M10.300 8H14v3.700h-3.700z" fill="#79b532" /><path d="M6 12.300h3.700V16H6z" fill="#2d98d8" /><path d="M10.300 12.300H14V16h-3.700z" fill="#f2b52b" /></svg>
        </TaskButton>
        <TaskButton>
            <svg width="21" height="18" viewBox="0 0 21 18"><path d="M0 6 10.500 0 21 6v3H0z" fill="#1667ae" /><path d="M0 6h21v12H0z" fill="#2b98e2" /><path d="M2 6h17l-8.500 7z" fill="#f1f7fc" /><path d="M0 6l10.500 7L21 6v12H0z" fill="#45b3f0" fillOpacity=".75" /></svg>
        </TaskButton>
        <TaskButton>
            <svg width="17" height="19" viewBox="0 0 17 19"><path d="M7.500 0h2L14 15H3z" fill="#f07d17" /><path d="M6.400 4h4.200l1.100 3.500H5.300zM4.600 10h7.800l.8 3H3.800z" fill="#f6f0ea" /><path d="M2 14.500h13l2 4.500H0z" fill="#ee7d12" /></svg>
        </TaskButton>
        <TaskButton $running>
            <svg width="21" height="20" viewBox="0 0 21 20"><circle cx="10" cy="10" r="10" fill="#e8b820" /><path d="M10 10 1.300 5A10 10 0 0 0 9 20l5-8z" fill="#2ba24c" /><path d="M1.300 5a10 10 0 0 1 17.400 0H10v5z" fill="#dc4434" /><circle cx="10" cy="10" r="5" fill="#fff" /><circle cx="10" cy="10" r="3.800" fill="#3c7de0" /><circle cx="14.500" cy="14" r="6" fill="#6d4426" /><path d="M11 12l2 2M15 10l2 3M13 17l4-2" stroke="#a87647" /></svg>
        </TaskButton>
        <TaskButton>
            <svg width="21" height="21" viewBox="0 0 21 21"><path d="M.5 20.500 2 15A10 10 0 1 1 6 19z" fill="#fff" /><path d="M2.500 18.500l1-3.800A8.200 8.200 0 1 1 6.500 17.500z" fill="#3cc653" /><path d="M7.500 5.800c-2 1-1.200 3.700.8 6s5.500 4 7 1.800c.6-1-.3-1.600-2-2.400l-1.200 1.200c-1.500-.6-2.700-1.800-3.300-3l.9-1.200c-.5-1.500-1-2.500-2.200-2.400z" fill="#fff" /></svg>
        </TaskButton>
        <TaskButton $running $active>
            <svg width="20" height="20" viewBox="0 0 20 20"><path d="M0 0h20v20H0z" fill="#f5f9fc" /><path d="M0 12.500h20V20H0z" fill="#4493c4" /><path d="M1 4 4 2.500h7V6L7 9V6L5 6.500 3 8z" fill="#12609d" /><text x="18.500" y="18.600" fontSize="5" fontWeight="bold" fill="#fff" textAnchor="end">2022</text></svg>
        </TaskButton>
        <TaskButton $running>
            <svg width="20" height="20" viewBox="0 0 20 20"><rect width="20" height="20" rx="6.500" fill="#1463f3" /><text x="10" y="11.800" fontSize="5.600" fontWeight="600" fill="#fff" textAnchor="middle">zoom</text></svg>
        </TaskButton>
    </>
);

const Tray = () => (
    <>
        <Weather>
            <svg width="20" height="17" viewBox="0 0 20 17"><circle cx="10" cy="8.500" r="8" fill="#f7a923" /><path d="M1 5h12M5 8h13M0 11h12M3 14h14" stroke="#ffe08a" strokeWidth="1.400" /><circle cx="17" cy="2.500" r="2.500" fill="#d9452b" /></svg>
            {'37°C  Haze'}
        </Weather>
        <Slot $w={20}><svg width="10" height="6" viewBox="0 0 10 6"><path d="M.5 5.500 5 1l4.500 4.500" fill="none" stroke="#f4f1f4" /></svg></Slot>
        <Slot $w={20}>
            <svg width="10" height="12" viewBox="0 0 10 12" fill="none" stroke="#f4f1f4"><rect x=".5" y="3" width="6" height="6" rx="1" /><path d="M6.500 5.500 9.500 4v4.500L6.500 7M1.500 1C3 .2 5 .2 6.500 1M1.500 11c1.500.8 3.500.8 5 0" /></svg>
        </Slot>
        <Slot $w={18}><svg width="9" height="13" viewBox="0 0 9 13"><rect x="2.200" width="4.600" height="8.500" rx="1.500" fill="#fff" /><path d="M.6 6c0 5 7.800 5 7.800 0M4.500 9.500V12M2 12.500h5" fill="none" stroke="#fff" /></svg></Slot>
        <Slot $w={21}><svg width="14" height="9" viewBox="0 0 14 9"><path d="M3.500 3h8.500v5H3.500z" fill="#fff" stroke="#fff" /><path d="M13 4.500v2M0 1h4M1 0v3h2V0M2 3v3.500h1.500" stroke="#fff" fill="none" strokeWidth="1.200" /></svg></Slot>
        <Slot $w={20}><svg width="13" height="11" viewBox="0 0 13 11" fill="none" stroke="#f4f1f4"><path d="M.5 3.500h2L5.500 1v9L2.500 7.500h-2zM7.500 4c.8 1 .8 2 0 3M9.300 2.500c1.500 2 1.500 4 0 6" /><path d="M11 1c2 3 2 6 0 9" stroke="#9a8b9a" /></svg></Slot>
        <Slot $w={20}><svg width="11" height="11" viewBox="0 0 11 11" fill="none" stroke="#d9d2d9"><path d="M.5 11C.5 5 5 .5 11 .5M3.500 11c0-4.500 3-7.500 7.500-7.500M6.500 11c0-2.800 1.700-4.500 4.500-4.500" /><circle cx="9.800" cy="9.800" r=".7" fill="#fff" /></svg></Slot>
        <Clock>12:55 PM<br />16-Apr-23</Clock>
        <Slot $w={35}>
            <svg width="20" height="20" viewBox="0 0 20 20"><path d="M1 1h13v11H6l-3 3v-3H1z" fill="#fff" /><path d="M3.500 4h8M3.500 6.500h8M3.500 9h5" stroke="#331a33" /><circle cx="13.500" cy="13.500" r="5.500" fill="#4a484b" stroke="#8b898c" /><text x="13.500" y="16.800" fontSize="9" fontWeight="bold" fill="#fff" textAnchor="middle">2</text></svg>
        </Slot>
        <Slot $w={8} />
    </>
);

const App = () => (
    <Window>
        <GlobalStyle />
        <TitleBar>
            <Slot $w={13}><AppIcon /></Slot>
            <Slot $w={9} />
            <Slot $w={23}><NewFile /></Slot>
            <Slot $w={24}><Folder /></Slot>
            <Slot $w={22}><Save /></Slot>
            <Slot $w={25}><Undo /></Slot>
            <Slot $w={22}><Undo flip /></Slot>
            <Slot $w={24}><Binoculars /></Slot>
            <Slot $w={22}><Weight dot /></Slot>
            <Slot $w={26}><ErrorDot size={11} /></Slot>
            <Slot $w={24}><svg width="5" height="5" viewBox="0 0 5 5"><path d="M0 .5h5M0 2h5L2.500 5z" fill="#85848b" stroke="#85848b" strokeWidth=".4" /></svg></Slot>
            <WindowTitle><b>TSD2</b> - Tekla Structural Designer Educational</WindowTitle>
            <Slot $w={6} />
            <UserBox><User />Mainak Choudhury</UserBox>
            <Spacer />
            <Slot $w={24}><svg width="7" height="2" viewBox="0 0 7 2"><path d="M0 1h7" stroke="#55545b" strokeWidth="1.500" /></svg></Slot>
            <Slot $w={27}><Restore /></Slot>
            <Slot $w={23}><Close size={8} /></Slot>
        </TitleBar>
        <TabStrip>
            <FileTab>FILE</FileTab>
            {ribbonTabs.map(([label, width]) => (
                <RibbonTab key={label} $w={width} $active={label === 'RESULTS'}>{label}</RibbonTab>
            ))}
            <Spacer />
            <Slot $w={24}><svg width="8" height="5" viewBox="0 0 8 5"><path d="M.8 4.300 4 1l3.200 3.300" fill="none" stroke="#55545b" strokeWidth="1.500" /></svg></Slot>
            <Slot $w={23}><Roundel label="?" /></Slot>
            <Slot $w={25}><Roundel label="i" /></Slot>
            <Slot $w={6} />
        </TabStrip>
        <Ribbon />
        <Main>
            <LeftPanels />
            <ModelView />
            <RightRail />
        </Main>
        <Status />
        <Taskbar>
            <Slot $w={40}><svg width="14" height="14" viewBox="0 0 14 14"><path d="M0 2l6-.8v5.500H0zM6.700 1 14 0v6.700H6.700zM0 7.300h6v5.500L0 12zM6.700 7.300H14V14l-7.300-1z" fill="#fff" /></svg></Slot>
            <SearchBox>
                <svg width="14" height="14" viewBox="0 0 14 14" fill="none" stroke="#2e2d30" strokeWidth="1.300"><circle cx="8.500" cy="5.500" r="4.700" /><path d="M5.200 8.800.5 13.500" /></svg>
                <span>Type here to search</span>
                <SearchArt />
            </SearchBox>
            <TaskApps />
            <Spacer />
            <Tray />
        </Taskbar>
    </Window>
);

export default App;
